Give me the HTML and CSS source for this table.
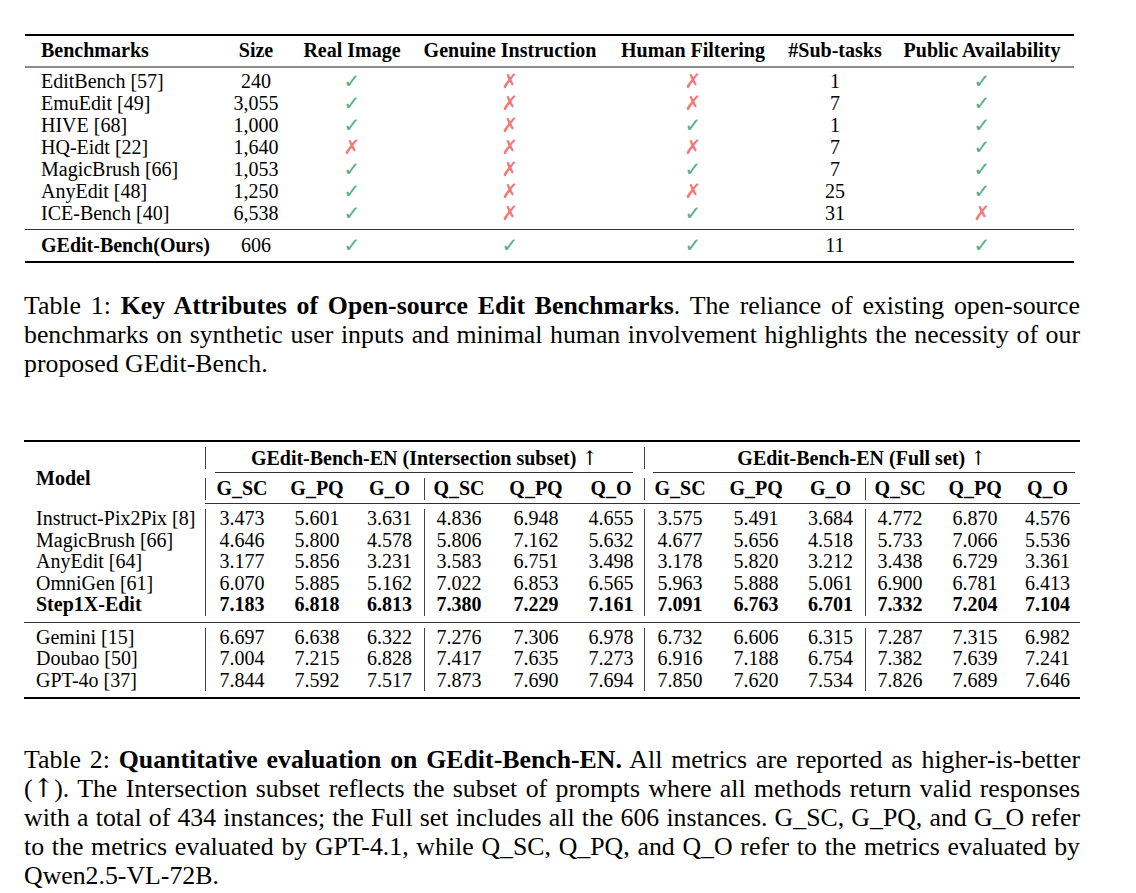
FILE: index.html
```html
<!DOCTYPE html>
<html lang="en">
<head>
<meta charset="utf-8">
<title>GEdit-Bench tables</title>
<link rel="stylesheet" href="styles.css">
</head>
<body>
<main class="page">
  <table class="t1">
    <colgroup>
      <col class="w197"><col class="w68"><col class="w124"><col class="w192"><col class="w174"><col class="w110"><col class="w184">
    </colgroup>
    <thead>
      <tr><th class="name">Benchmarks</th><th>Size</th><th>Real Image</th><th>Genuine Instruction</th><th>Human Filtering</th><th>#Sub-tasks</th><th>Public Availability</th></tr>
    </thead>
    <tbody class="others">
      <tr><td class="name">EditBench [57]</td><td>240</td><td><span class="yes">✓</span></td><td><span class="no">✗</span></td><td><span class="no">✗</span></td><td>1</td><td><span class="yes">✓</span></td></tr>
      <tr><td class="name">EmuEdit [49]</td><td>3,055</td><td><span class="yes">✓</span></td><td><span class="no">✗</span></td><td><span class="no">✗</span></td><td>7</td><td><span class="yes">✓</span></td></tr>
      <tr><td class="name">HIVE [68]</td><td>1,000</td><td><span class="yes">✓</span></td><td><span class="no">✗</span></td><td><span class="yes">✓</span></td><td>1</td><td><span class="yes">✓</span></td></tr>
      <tr><td class="name">HQ-Eidt [22]</td><td>1,640</td><td><span class="no">✗</span></td><td><span class="no">✗</span></td><td><span class="no">✗</span></td><td>7</td><td><span class="yes">✓</span></td></tr>
      <tr><td class="name">MagicBrush [66]</td><td>1,053</td><td><span class="yes">✓</span></td><td><span class="no">✗</span></td><td><span class="yes">✓</span></td><td>7</td><td><span class="yes">✓</span></td></tr>
      <tr><td class="name">AnyEdit [48]</td><td>1,250</td><td><span class="yes">✓</span></td><td><span class="no">✗</span></td><td><span class="no">✗</span></td><td>25</td><td><span class="yes">✓</span></td></tr>
      <tr><td class="name">ICE-Bench [40]</td><td>6,538</td><td><span class="yes">✓</span></td><td><span class="no">✗</span></td><td><span class="yes">✓</span></td><td>31</td><td><span class="no">✗</span></td></tr>
    </tbody>
    <tbody class="ours">
      <tr><td class="name"><b>GEdit-Bench(Ours)</b></td><td>606</td><td><span class="yes">✓</span></td><td><span class="yes">✓</span></td><td><span class="yes">✓</span></td><td>11</td><td><span class="yes">✓</span></td></tr>
    </tbody>
  </table>

  <p class="cap cap1">Table 1: <b>Key Attributes of Open-source Edit Benchmarks</b>. The reliance of existing open-source benchmarks on synthetic user inputs and minimal human involvement highlights the necessity of our proposed GEdit-Bench.</p>

  <table class="t2">
    <colgroup>
      <col class="w181"><col class="w74"><col class="w76"><col class="w69"><col class="w70"><col class="w84"><col class="w66"><col class="w72"><col class="w80"><col class="w69"><col class="w70"><col class="w80"><col class="w65">
    </colgroup>
    <thead>
      <tr class="grp-row">
        <th rowspan="2" class="name model">Model</th>
        <th colspan="6" class="grp grp1">GEdit-Bench-EN (Intersection subset) <span class="arr">↑</span></th>
        <th colspan="6" class="grp grp2">GEdit-Bench-EN (Full set) <span class="arr">↑</span></th>
      </tr>
      <tr class="sub-row">
        <th class="bl">G_SC</th><th>G_PQ</th><th>G_O</th><th class="bl">Q_SC</th><th>Q_PQ</th><th>Q_O</th>
        <th class="bl">G_SC</th><th>G_PQ</th><th>G_O</th><th class="bl">Q_SC</th><th>Q_PQ</th><th>Q_O</th>
      </tr>
    </thead>
    <tbody>
      <tr><td class="name">Instruct-Pix2Pix [8]</td><td class="bl">3.473</td><td>5.601</td><td>3.631</td><td class="bl">4.836</td><td>6.948</td><td>4.655</td><td class="bl">3.575</td><td>5.491</td><td>3.684</td><td class="bl">4.772</td><td>6.870</td><td>4.576</td></tr>
      <tr><td class="name">MagicBrush [66]</td><td class="bl">4.646</td><td>5.800</td><td>4.578</td><td class="bl">5.806</td><td>7.162</td><td>5.632</td><td class="bl">4.677</td><td>5.656</td><td>4.518</td><td class="bl">5.733</td><td>7.066</td><td>5.536</td></tr>
      <tr><td class="name">AnyEdit [64]</td><td class="bl">3.177</td><td>5.856</td><td>3.231</td><td class="bl">3.583</td><td>6.751</td><td>3.498</td><td class="bl">3.178</td><td>5.820</td><td>3.212</td><td class="bl">3.438</td><td>6.729</td><td>3.361</td></tr>
      <tr><td class="name">OmniGen [61]</td><td class="bl">6.070</td><td>5.885</td><td>5.162</td><td class="bl">7.022</td><td>6.853</td><td>6.565</td><td class="bl">5.963</td><td>5.888</td><td>5.061</td><td class="bl">6.900</td><td>6.781</td><td>6.413</td></tr>
      <tr class="best"><td class="name">Step1X-Edit</td><td class="bl">7.183</td><td>6.818</td><td>6.813</td><td class="bl">7.380</td><td>7.229</td><td>7.161</td><td class="bl">7.091</td><td>6.763</td><td>6.701</td><td class="bl">7.332</td><td>7.204</td><td>7.104</td></tr>
    </tbody>
    <tbody>
      <tr><td class="name">Gemini [15]</td><td class="bl">6.697</td><td>6.638</td><td>6.322</td><td class="bl">7.276</td><td>7.306</td><td>6.978</td><td class="bl">6.732</td><td>6.606</td><td>6.315</td><td class="bl">7.287</td><td>7.315</td><td>6.982</td></tr>
      <tr><td class="name">Doubao [50]</td><td class="bl">7.004</td><td>7.215</td><td>6.828</td><td class="bl">7.417</td><td>7.635</td><td>7.273</td><td class="bl">6.916</td><td>7.188</td><td>6.754</td><td class="bl">7.382</td><td>7.639</td><td>7.241</td></tr>
      <tr><td class="name">GPT-4o [37]</td><td class="bl">7.844</td><td>7.592</td><td>7.517</td><td class="bl">7.873</td><td>7.690</td><td>7.694</td><td class="bl">7.850</td><td>7.620</td><td>7.534</td><td class="bl">7.826</td><td>7.689</td><td>7.646</td></tr>
    </tbody>
  </table>

  <p class="cap cap2">Table 2: <b>Quantitative evaluation on GEdit-Bench-EN.</b> All metrics are reported as higher-is-better (<span class="arr">↑</span>). The Intersection subset reflects the subset of prompts where all methods return valid responses with a total of 434 instances; the Full set includes all the 606 instances. G_SC, G_PQ, and G_O refer to the metrics evaluated by GPT-4.1, while Q_SC, Q_PQ, and Q_O refer to the metrics evaluated by Qwen2.5-VL-72B.</p>
</main>
</body>
</html>
```

FILE: styles.css
```css
* { box-sizing: border-box; }

html, body {
  margin: 0;
  background: #fff;
  color: #000;
  font-family: "Liberation Serif", "Times New Roman", "DejaVu Serif", serif;
}

.page {
  width: 1136px;
  padding: 34px 56px 0 24px;
}

table {
  border-collapse: collapse;
  table-layout: fixed;
  font-size: 20px;
}

th, td {
  padding: 0;
  text-align: center;
  white-space: nowrap;
  font-weight: normal;
}

th { font-weight: bold; }

.name { text-align: left; }

.arr {
  font-family: "DejaVu Serif", serif;
  font-weight: normal;
  color: #000;
  line-height: 1;
}

/* column widths */
.w197 { width: 197px; }
.w68 { width: 68px; }
.w124 { width: 124px; }
.w192 { width: 192px; }
.w174 { width: 174px; }
.w110 { width: 110px; }
.w184 { width: 184px; }
.w181 { width: 181px; }
.w74 { width: 74px; }
.w76 { width: 76px; }
.w69 { width: 69px; }
.w70 { width: 70px; }
.w84 { width: 84px; }
.w66 { width: 66px; }
.w72 { width: 72px; }
.w80 { width: 80px; }
.w65 { width: 65px; }

/* ---------- Table 1 ---------- */
.t1 {
  width: 1049px;
  margin-left: 1px;
  line-height: 22px;
  border-top: 2px solid #000;
  border-bottom: 2px solid #000;
}

.t1 .name { padding-left: 16px; }

.t1 thead th {
  padding: 3px 0 5px;
  border-bottom: 2px solid #8a8a8a;
}

.t1 tbody.others td { height: 22px; }
.t1 tbody.others tr:first-child td { padding-top: 2px; height: 24px; }
.t1 tbody.others tr:last-child td { padding-bottom: 5px; height: 27px; }

.t1 tbody.ours { border-top: 1px solid #333; }
.t1 tbody.ours td { padding-top: 4px; padding-bottom: 5px; height: 31px; }

.yes, .no {
  font-family: "DejaVu Sans", sans-serif;
  font-size: 20px;
  line-height: 1;
}
.yes { color: #5aad8a; }
.no { color: #f07a7a; }

/* ---------- Captions ---------- */
.cap {
  width: 1056px;
  margin: 0;
  font-size: 25.8px;
  line-height: 28.8px;
  text-align: justify;
}

.cap1 { margin-top: 29px; }
.cap2 { margin-top: 47px; }

/* ---------- Table 2 ---------- */
.t2 {
  width: 1056px;
  margin-top: 62px;
  line-height: 21.5px;
  border-top: 2px solid #000;
  border-bottom: 2px solid #000;
}

.t2 .name { padding-left: 12px; }

.t2 .model {
  vertical-align: bottom;
  padding-bottom: 14px;
}

.t2 thead tr.sub-row th { border-bottom: 1px solid #333; }

.t2 .grp {
  padding: 5px 0 4px;
  line-height: 22px;
  background:
    linear-gradient(#444, #444) no-repeat 0 5px / 1px 22px,
    linear-gradient(#333, #333) no-repeat 10px 100% / calc(100% - 21px) 1px;
}

.t2 .grp2 {
  background:
    linear-gradient(#444, #444) no-repeat 0 5px / 1px 22px,
    linear-gradient(#333, #333) no-repeat 9px 100% / calc(100% - 14px) 1px;
}

.t2 .sub-row th {
  padding: 4px 0 4px;
  line-height: 22px;
}

.t2 .sub-row th.bl {
  background: linear-gradient(#444, #444) no-repeat 0 5px / 1px 22px;
}

.t2 td.bl {
  background: linear-gradient(#444, #444) no-repeat 0 0 / 1px 100%;
}

.t2 tbody tr:first-child td { padding-top: 4px; }
.t2 tbody tr:first-child td.bl { background-position: 0 5px; }
.t2 tbody tr:last-child td { padding-bottom: 6px; }
.t2 tbody tr:last-child td.bl { background-size: 1px calc(100% - 6px); }

.t2 tbody + tbody { border-top: 1px solid #333; }

.t2 .best td { font-weight: bold; }
```
